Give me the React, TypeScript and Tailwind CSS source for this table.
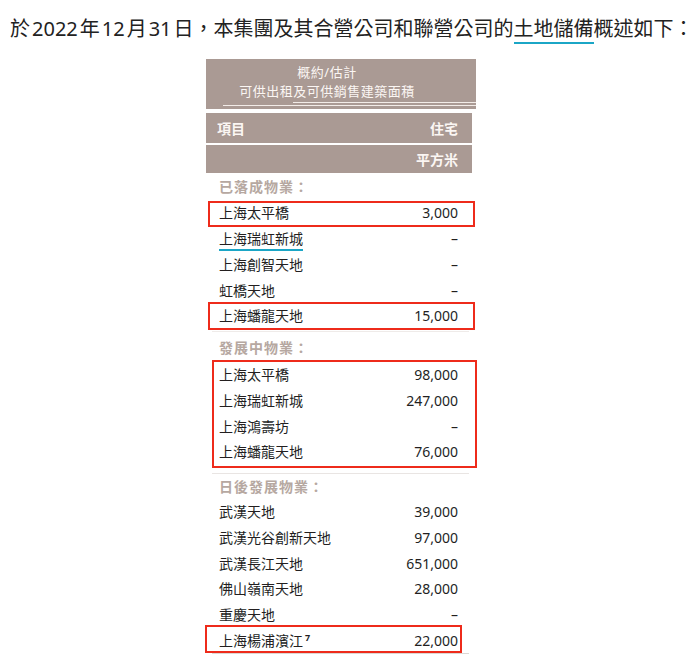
import type { ReactNode } from 'react'

type Row = { name: ReactNode; value: string }

const FONT = "font-['Noto_Sans','Noto_Sans_CJK_TC',sans-serif]"
const PUNCT = "font-['Noto_Sans_CJK_TC',sans-serif]"

const completed: Row[] = [
  { name: '上海太平橋', value: '3,000' },
  { name: <span className="border-b-2 border-[#1ba6c6] pb-[1px]">上海瑞虹新城</span>, value: '–' },
  { name: '上海創智天地', value: '–' },
  { name: '虹橋天地', value: '–' },
  { name: '上海蟠龍天地', value: '15,000' },
]

const developing: Row[] = [
  { name: '上海太平橋', value: '98,000' },
  { name: '上海瑞虹新城', value: '247,000' },
  { name: '上海鴻壽坊', value: '–' },
  { name: '上海蟠龍天地', value: '76,000' },
]

const future: Row[] = [
  { name: '武漢天地', value: '39,000' },
  { name: '武漢光谷創新天地', value: '97,000' },
  { name: '武漢長江天地', value: '651,000' },
  { name: '佛山嶺南天地', value: '28,000' },
  { name: '重慶天地', value: '–' },
]

function TableRow({ row }: { row: Row }) {
  return (
    <div className="flex h-[25.75px] items-center justify-between pl-[13px] pr-[18px] text-[14px] text-[#231f1f]">
      <span>{row.name}</span>
      <span>{row.value}</span>
    </div>
  )
}

// red annotation frame drawn over a group of rows
function Marked({ children, frame }: { children: ReactNode; frame: string }) {
  return (
    <div className="relative">
      {children}
      <div className={`pointer-events-none absolute border-2 border-[#ee2b1b] ${frame}`} />
    </div>
  )
}

function Label({ text, className = '' }: { text: string; className?: string }) {
  return (
    <div className={`flex items-center pl-[13px] text-[14px] font-bold tracking-[1px] text-[#b6a8a1] ${className}`}>
      {text}
    </div>
  )
}

const Num = ({ children }: { children: string }) => <span className="mx-[2px]">{children}</span>

export default function App() {
  return (
    <div className={`${FONT} min-h-[662px] bg-white`}>
      <p className="whitespace-nowrap pl-[10px] pt-[14px] text-[20px] leading-[28px] text-[#222]">
        於<Num>2022</Num>年<Num>12</Num>月<Num>31</Num>日<span className={PUNCT}>，</span>本集團及其合營公司和聯營公司的
        <span className="border-b-2 border-[#1ba6c6]">土地儲備</span>
        概述如下<span className={PUNCT}>：</span>
      </p>

      <div className="ml-[206px] mt-[16px] w-[270px]">
        {/* header blocks */}
        <div className="relative h-[50px] bg-[#aa9a94] pr-[28px] pt-[4px] text-center text-[13px] leading-[19px] tracking-[0.5px] text-[#fbf6f3]">
          <div>概約/估計</div>
          <div>可供出租及可供銷售建築面積</div>
          <div className="absolute left-[87px] right-0 top-[43px] h-px bg-[#f3ece8]" />
          <div className="absolute left-[17px] right-0 top-[46px] h-px bg-[#f3ece8]" />
        </div>
        <div className="mr-[4px] mt-[4px] flex h-[30px] items-center justify-between bg-[#aa9a94] pl-[11px] pr-[14px] text-[14px] font-semibold text-[#fbf6f3]">
          <span>項目</span>
          <span>住宅</span>
        </div>
        <div className="mr-[4px] mt-[2px] flex h-[28px] items-center justify-end bg-[#aa9a94] pr-[14px] text-[14px] font-semibold text-[#fbf6f3]">
          平方米
        </div>

        {/* completed */}
        <Label text="已落成物業：" className="h-[27px]" />
        <Marked frame="left-[2px] right-[1px] top-[1px] bottom-[-1px]">
          <TableRow row={completed[0]} />
        </Marked>
        {completed.slice(1, 4).map((r, i) => (
          <TableRow key={i} row={r} />
        ))}
        <Marked frame="left-[2px] right-[1px] top-[-1px] bottom-[-1px]">
          <TableRow row={completed[4]} />
        </Marked>

        {/* under development */}
        <div className="ml-[6px] mr-[7px] mt-[2px] h-px bg-[#efebe9]" />
        <Label text="發展中物業：" className="h-[30px] pt-[2px]" />
        <Marked frame="left-[6px] right-[-1px] top-[-2px] bottom-[-3px]">
          {developing.map((r, i) => (
            <TableRow key={i} row={r} />
          ))}
        </Marked>

        {/* future */}
        <div className="ml-[6px] mr-[7px] mt-[8px] h-px bg-[#e9e5e3]" />
        <Label text="日後發展物業：" className="h-[25px]" />
        <div className="ml-[6px] mr-[7px] border-b border-[#dcd7d4]">
          <div className="-ml-[6px] -mr-[7px]">
            {future.map((r, i) => (
              <TableRow key={i} row={r} />
            ))}
            <Marked frame="left-[-1px] right-[14px] top-[-3px] bottom-[0px]">
              <TableRow
                row={{
                  name: (
                    <span>
                      上海楊浦濱江<sup className="ml-[2px] text-[9px] font-bold">7</sup>
                    </span>
                  ),
                  value: '22,000',
                }}
              />
            </Marked>
          </div>
        </div>
      </div>
    </div>
  )
}
